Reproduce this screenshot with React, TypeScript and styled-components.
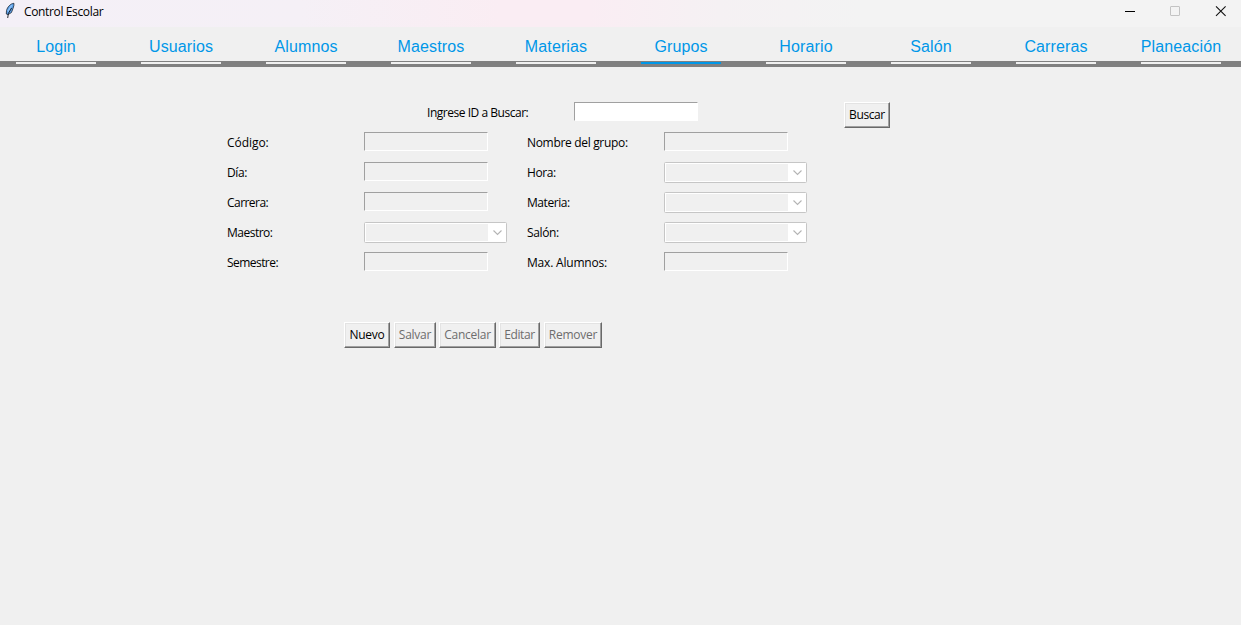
import React from 'react';
import styled, { createGlobalStyle } from 'styled-components';

const GlobalStyle = createGlobalStyle`
  * { box-sizing: border-box; }
  body { margin: 0; background: #f0f0f0; overflow: hidden; }
`;

const Window = styled.div`
  display: flex;
  flex-direction: column;
  width: 1241px;
  height: 625px;
  background: #f0f0f0;
  color: #000;
  font: 12px/16px 'Open Sans', 'Noto Sans', sans-serif;
`;

const TitleBar = styled.header`
  display: flex;
  align-items: flex-start;
  height: 27px;
  padding-left: 4px;
  background: linear-gradient(90deg, #f4f0f7 0, #f5f0f6 300px, #faedf3 500px, #faedf3 590px, #f5f1f3 720px, #f3f3f3 860px, #f3f3f3 100%);
`;

const Title = styled.span`
  flex: 1;
  margin: 4px 0 0 8px;
  font-size: 12px;
  letter-spacing: -0.36px;
`;

const WindowControls = styled.div`
  display: flex;
  svg { display: block; }
`;

const Tabs = styled.nav`
  display: grid;
  grid-template-columns: repeat(10, 80px);
  column-gap: 45px;
  height: 40px;
  padding-left: 16px;
  background: linear-gradient(#f0f0f0 34px, #808080 34px);
`;

const Tab = styled.a<{ $active: boolean }>`
  display: flex;
  justify-content: center;
  height: 37px;
  padding-top: 10px;
  border-bottom: 2px solid ${p => (p.$active ? '#0097e8' : '#f0f0f0')};
  color: #0097e8;
  font: 16px/20px 'Liberation Sans', Arial, sans-serif;
  letter-spacing: 0.12px;
  white-space: nowrap;
`;

const Main = styled.main`
  display: flex;
  flex-direction: column;
  padding-top: 35px;
`;

const SearchRow = styled.div`
  display: grid;
  grid-template-columns: 147px 270px auto;
  justify-content: start;
  align-items: start;
  height: 30px;
  padding-left: 427px;
`;

const FormGrid = styled.div`
  display: grid;
  grid-template-columns: 137px 163px 137px 143px;
  grid-auto-rows: 30px;
  align-items: start;
  padding-left: 227px;
`;

const Label = styled.label<{ $spacing?: number }>`
  padding-top: 3px;
  white-space: nowrap;
  letter-spacing: ${p => p.$spacing ?? -0.2}px;
`;

const Entry = styled.input`
  width: 124px;
  height: 19px;
  padding: 0 2px;
  border: 1px solid;
  border-color: #a0a0a0 #fff #fff #a0a0a0;
  border-radius: 0;
  background: #fff;
  font: inherit;
  outline: none;
  &:disabled { background: #f0f0f0; }
`;

const Combo = styled.div`
  display: flex;
  width: 143px;
  height: 21px;
  padding: 1px;
  border: 1px solid #c6c6c6;
  border-radius: 1.5px;
  background: #fff;
`;

const ComboValue = styled.span`
  width: 122px;
  background: #f0f0f0;
`;

const ComboArrow = styled.svg`
  display: block;
  width: 17px;
  height: 17px;
`;

const Actions = styled.div`
  display: flex;
  padding: 40px 0 0 344px;
`;

const Button = styled.button<{ $width: number; $gap?: number; $spacing?: number }>`
  width: ${p => p.$width}px;
  height: 26px;
  margin: 0 ${p => p.$gap ?? 0}px 0 0;
  padding: 0;
  border: 1px solid;
  border-color: #fff #696969 #696969 #fff;
  border-radius: 0;
  background: #f0f0f0;
  box-shadow: inset -1px -1px #a0a0a0, inset 1px 1px #e3e3e3;
  color: #000;
  font: inherit;
  letter-spacing: ${p => p.$spacing ?? -0.25}px;
  white-space: nowrap;
  &:disabled { color: #6d6d6d; }
`;

const Feather = () => (
  <svg width="12" height="20" viewBox="0 0 12 20">
    <path d="M9.9 3.3 C6.3 3.6 3.4 7.2 2.5 10.5 L2.3 14 L4 14.6 L7.4 12.6 L9 8.5 L9.9 5.4Z" fill="#5c9fe6" stroke="#1c2735" strokeWidth="0.8" />
    <path d="M7.8 5 L4 11.4" stroke="#8cc2fa" strokeWidth="1.4" />
    <path d="M7.6 8 L4.4 13.4 L3.7 18" fill="none" stroke="#10151c" strokeWidth="0.9" />
  </svg>
);

const tabs = ['Login', 'Usuarios', 'Alumnos', 'Maestros', 'Materias', 'Grupos', 'Horario', 'Salón', 'Carreras', 'Planeación'];

type Field = { label: string; combo?: boolean; spacing?: number };

const fields: Field[] = [
  { label: 'Código:', spacing: -0.05 },
  { label: 'Nombre del grupo:', spacing: -0.32 },
  { label: 'Día:', spacing: -0.4 },
  { label: 'Hora:', combo: true, spacing: -0.4 },
  { label: 'Carrera:', spacing: -0.55 },
  { label: 'Materia:', combo: true, spacing: -0.45 },
  { label: 'Maestro:', combo: true, spacing: -0.5 },
  { label: 'Salón:', combo: true, spacing: -0.36 },
  { label: 'Semestre:', spacing: -0.55 },
  { label: 'Max. Alumnos:' },
];

const ComboBox = () => (
  <Combo>
    <ComboValue />
    <ComboArrow viewBox="0 0 17 17">
      <path d="M5.5 6.5 L9.5 10.5 L13.5 6.5" fill="none" stroke="#b4b4b4" strokeWidth="1.1" />
    </ComboArrow>
  </Combo>
);

export default function App() {
  return (
    <Window>
      <GlobalStyle />
      <TitleBar>
        <Feather />
        <Title>Control Escolar</Title>
        <WindowControls>
          <svg width="116" height="24" viewBox="0 0 116 24" fill="none">
            <path d="M0 11.5H10" stroke="#000" />
            <rect x="45.5" y="6.5" width="9" height="9" rx="0.5" stroke="#c3c3c3" />
            <path d="M91 6.3L100.6 15.8M100.6 6.3L91 15.8" stroke="#111" strokeWidth="1.1" />
          </svg>
        </WindowControls>
      </TitleBar>
      <Tabs>
        {tabs.map(t => (
          <Tab key={t} $active={t === 'Grupos'}>{t}</Tab>
        ))}
      </Tabs>
      <Main>
        <SearchRow>
          <Label $spacing={-0.47}>Ingrese ID a Buscar:</Label>
          <Entry />
          <Button $width={46} $spacing={-0.4}>Buscar</Button>
        </SearchRow>
        <FormGrid>
          {fields.map(f => (
            <React.Fragment key={f.label}>
              <Label $spacing={f.spacing}>{f.label}</Label>
              {f.combo ? <ComboBox /> : <Entry disabled />}
            </React.Fragment>
          ))}
        </FormGrid>
        <Actions>
          <Button $width={46} $gap={4}>Nuevo</Button>
          <Button $width={42} $gap={3} disabled>Salvar</Button>
          <Button $width={57} $gap={3} disabled>Cancelar</Button>
          <Button $width={41} $gap={4} $spacing={-0.4} disabled>Editar</Button>
          <Button $width={58} disabled>Remover</Button>
        </Actions>
      </Main>
    </Window>
  );
}
